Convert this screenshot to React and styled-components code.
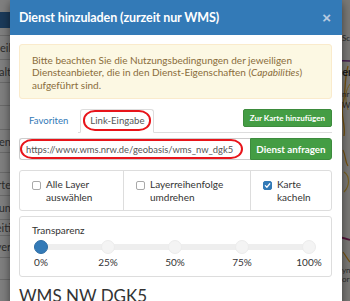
import React from 'react';
import styled, { createGlobalStyle } from 'styled-components';

const GlobalStyle = createGlobalStyle`
  html, body { margin: 0; padding: 0; }
  body {
    width: 350px;
    height: 301px;
    overflow: hidden;
    background: #fff;
    font-family: Lato, "Liberation Sans", sans-serif;
  }
  * { box-sizing: border-box; }
`;

const Page = styled.div`
  position: relative;
  width: 350px;
  height: 301px;
  display: grid;
  grid-template-columns: 260px 1fr;
  overflow: hidden;
`;

const Sidebar = styled.aside`
  display: flex;
  flex-direction: column;
  background: #fff;
  overflow: hidden;
`;

const SideTop = styled.div`
  height: 15px;
`;

const SideNav = styled.div`
  height: 20px;
  background: #3674b4;
`;

const SideGap = styled.div`
  height: 8px;
`;

const SideRow = styled.div`
  height: ${(p) => p.$h}px;
  flex: none;
  border-top: 1px solid #d4d4d4;
  display: flex;
  align-items: center;
  justify-content: flex-end;
  padding-right: 249px;
  white-space: nowrap;
  font-size: 11px;
  color: #5a5a5a;
`;

const MapArea = styled.div`
  background: #f4f2ec;
  overflow: hidden;
`;

const Backdrop = styled.div`
  position: absolute;
  inset: 0;
  background: rgba(0, 0, 0, 0.5);
`;

const Dialog = styled.div`
  margin-left: 10px;
  width: 332px;
  height: 320px;
  background: #fff;
  box-shadow: 0 3px 9px rgba(0, 0, 0, 0.5);
`;

const Header = styled.div`
  height: 35px;
  background: #337ab7;
  color: #fff;
  display: flex;
  align-items: center;
  justify-content: space-between;
  padding: 0 11px 0 9px;
`;

const Title = styled.h4`
  margin: 0;
  font-size: 12.5px;
  font-weight: 700;
  letter-spacing: -0.1px;
`;

const Close = styled.span`
  font-family: "Liberation Sans", Arial, sans-serif;
  font-size: 15px;
  font-weight: 700;
  line-height: 1;
  color: #b9cbe0;
`;

const Body = styled.div`
  padding: 9px 10px 0 9px;
  color: #333;
`;

const Alert = styled.div`
  height: 55px;
  background: #fcf8e3;
  border: 1px solid #faebcc;
  border-radius: 3px;
  color: #8a6d3b;
  padding: 9px 12px;
  font-size: 10px;
  line-height: 12.3px;
`;

const TabBar = styled.div`
  margin-top: 10px;
  height: 24px;
  display: flex;
  align-items: flex-start;
  border-bottom: 1px solid #ddd;
`;

const Tab = styled.div`
  position: relative;
  padding: 5px 9px;
  margin-right: 2px;
  font-size: 9.6px;
  line-height: 12px;
  border: 1px solid ${(p) => (p.$active ? '#ddd' : 'transparent')};
  border-bottom-color: transparent;
  border-radius: 3px 3px 0 0;
  background: #fff;
  color: ${(p) => (p.$active ? '#555' : '#337ab7')};
`;

const Ring = styled.span`
  position: absolute;
  top: ${(p) => p.$t}px;
  bottom: ${(p) => p.$b}px;
  left: ${(p) => p.$l}px;
  right: ${(p) => p.$r}px;
  border: 2px solid #e8141a;
  border-radius: 12px / 10px;
  pointer-events: none;
`;

const AddButton = styled.button`
  margin-left: auto;
  height: 18px;
  padding: 0 6px;
  white-space: nowrap;
  font-family: inherit;
  font-size: 8px;
  font-weight: 700;
  color: #fff;
  background: #449d44;
  border: 1px solid #3d8b3d;
  border-radius: 2px;
`;

const InputGroup = styled.div`
  margin-top: 5px;
  height: 22px;
  display: flex;
`;

const InputWrap = styled.div`
  position: relative;
  flex: 1;
  display: flex;
`;

const UrlInput = styled.input`
  flex: 1;
  min-width: 0;
  height: 22px;
  border: 1px solid #ccc;
  border-right: 0;
  border-radius: 3px 0 0 3px;
  padding: 0 6px;
  font-family: inherit;
  font-size: 9.4px;
  color: #555;
  outline: none;
`;

const RequestButton = styled.button`
  flex: none;
  width: 82px;
  height: 22px;
  padding: 0;
  white-space: nowrap;
  font-family: inherit;
  font-size: 9.8px;
  font-weight: 700;
  color: #fff;
  background: #449d44;
  border: 1px solid #3d8b3d;
  border-radius: 0 3px 3px 0;
`;

const Options = styled.div`
  margin-top: 10px;
  height: 41px;
  display: grid;
  grid-template-columns: 103px 127px 1fr;
  border: 1px solid #ddd;
  border-radius: 3px;
`;

const Option = styled.label`
  display: flex;
  gap: 5px;
  padding: 7px 0 0 12px;
  font-size: 10px;
  line-height: 13px;
  color: #333;
  & + & {
    border-left: 1px solid #ddd;
  }
`;

const Check = styled.span`
  flex: none;
  width: 9px;
  height: 9px;
  margin-top: 3px;
  border-radius: 2px;
  border: 1px solid ${(p) => (p.$on ? '#337ab7' : '#a9a9a9')};
  background: ${(p) => (p.$on ? '#337ab7' : '#fff')};
  display: flex;
  align-items: center;
  justify-content: center;
`;

const Panel = styled.div`
  margin-top: 5px;
  border: 1px solid #ddd;
  border-radius: 3px;
  padding: 7px 7px 7px 6px;
`;

const PanelLabel = styled.div`
  padding-left: 6px;
  font-size: 10px;
  line-height: 13px;
  color: #333;
`;

const Track = styled.div`
  position: relative;
  margin-top: 3px;
  height: 14px;
  padding: 0 8px;
  display: flex;
  justify-content: space-between;
  &::before {
    content: '';
    position: absolute;
    left: 15px;
    right: 15px;
    top: 4px;
    height: 6px;
    border-radius: 3px;
    background: #eeeeee;
  }
`;

const Dot = styled.span`
  position: relative;
  width: 14px;
  height: 14px;
  border-radius: 50%;
  background: ${(p) => (p.$on ? '#337ab7' : '#f4f4f4')};
  border: 1px solid ${(p) => (p.$on ? '#2e6da4' : '#ececec')};
`;

const Marks = styled.div`
  margin-top: 2px;
  display: flex;
  justify-content: space-between;
`;

const Mark = styled.span`
  width: 30px;
  text-align: center;
  font-size: 10px;
  line-height: 13px;
  color: #333;
`;

const Heading = styled.h3`
  margin: 9px 0 0;
  font-size: 17px;
  line-height: 20px;
  font-weight: 400;
  color: #333;
`;

const sideRows = [
  [24, 'Verteil'],
  [23, 'Inhalt'],
  [23, ''],
  [24, ''],
  [23, 'Themen'],
  [20, ''],
  [23, 'Karte'],
  [24, 'Grun'],
  [16, 'Zeiti'],
  [22, 'Layer'],
  [22, ''],
  [22, ''],
];

function MapDrawing() {
  return (
    <svg width="90" height="301" viewBox="0 0 90 301">
      <rect width="90" height="301" fill="#f4f2ec" />
      <path d="M60 60 L90 61" stroke="#8b3aa0" strokeWidth="1.5" fill="none" />
      <path d="M88 66 C84 80, 86 92, 83 104 S86 124, 84 136" stroke="#e8a21c" strokeWidth="1.3" fill="none" />
      <path d="M90 84 C86 90, 84 96, 88 110" stroke="#f2c23a" strokeWidth="1" fill="none" />
      <path d="M83 150 C86 156, 85 162, 88 166" stroke="#e8a21c" strokeWidth="1.2" fill="none" />
      <path d="M84 172 C90 176, 90 186, 84 192" stroke="#f0c040" strokeWidth="1.2" fill="none" />
      <path d="M70 236 C78 236, 84 238, 90 240" stroke="#a0266f" strokeWidth="1.8" fill="none" />
      <path d="M83 252 C86 256, 88 260, 90 262" stroke="#e8a21c" strokeWidth="1.1" fill="none" />
      <text x="82" y="41" fontSize="8" fill="#555" fontFamily="Lato, sans-serif">Sch</text>
      <text x="75" y="76" fontSize="11" fontWeight="700" fill="#333" fontFamily="Lato, sans-serif">Bem</text>
      <text x="82" y="97" fontSize="8" fill="#555" fontFamily="Lato, sans-serif">nr</text>
      <text x="82" y="108" fontSize="8" fill="#555" fontFamily="Lato, sans-serif">We</text>
      <text x="82" y="273" fontSize="8" fill="#555" fontFamily="Lato, sans-serif">ynl</text>
      <text x="82" y="282" fontSize="8" fill="#555" fontFamily="Lato, sans-serif">ort</text>
    </svg>
  );
}

function CheckMark() {
  return (
    <svg width="7" height="7" viewBox="0 0 8 8">
      <path d="M1.5 4.2 L3.3 6 L6.6 2" stroke="#fff" strokeWidth="1.4" fill="none" strokeLinecap="round" strokeLinejoin="round" />
    </svg>
  );
}

export default function App() {
  const marks = ['0%', '25%', '50%', '75%', '100%'];
  return (
    <>
      <GlobalStyle />
      <Page>
        <Sidebar>
          <SideTop />
          <SideNav />
          <SideGap />
          {sideRows.map(([h, t], i) => (
            <SideRow key={i} $h={h}>{t}</SideRow>
          ))}
        </Sidebar>
        <MapArea>
          <MapDrawing />
        </MapArea>
        <Backdrop>
          <Dialog>
            <Header>
              <Title>Dienst hinzuladen (zurzeit nur WMS)</Title>
              <Close>×</Close>
            </Header>
            <Body>
              <Alert>
                Bitte beachten Sie die Nutzungsbedingungen der jeweiligen
                <br />
                Diensteanbieter, die in den Dienst-Eigenschaften (<i>Capabilities</i>)
                <br />
                aufgeführt sind.
              </Alert>
              <TabBar>
                <Tab>Favoriten</Tab>
                <Tab $active>
                  Link-Eingabe
                  <Ring $t={0} $b={1} $l={2} $r={2} />
                </Tab>
                <AddButton>Zur Karte hinzufügen</AddButton>
              </TabBar>
              <InputGroup>
                <InputWrap>
                  <UrlInput readOnly value="https://www.wms.nrw.de/geobasis/wms_nw_dgk5" />
                  <Ring $t={1} $b={1} $l={1} $r={7} />
                </InputWrap>
                <RequestButton>Dienst anfragen</RequestButton>
              </InputGroup>
              <Options>
                <Option>
                  <Check />
                  <span>Alle Layer<br />auswählen</span>
                </Option>
                <Option>
                  <Check />
                  <span>Layerreihenfolge<br />umdrehen</span>
                </Option>
                <Option>
                  <Check $on><CheckMark /></Check>
                  <span>Karte<br />kacheln</span>
                </Option>
              </Options>
              <Panel>
                <PanelLabel>Transparenz</PanelLabel>
                <Track>
                  {marks.map((m, i) => (
                    <Dot key={m} $on={i === 0} />
                  ))}
                </Track>
                <Marks>
                  {marks.map((m) => (
                    <Mark key={m}>{m}</Mark>
                  ))}
                </Marks>
              </Panel>
              <Heading>WMS NW DGK5</Heading>
            </Body>
          </Dialog>
        </Backdrop>
      </Page>
    </>
  );
}
